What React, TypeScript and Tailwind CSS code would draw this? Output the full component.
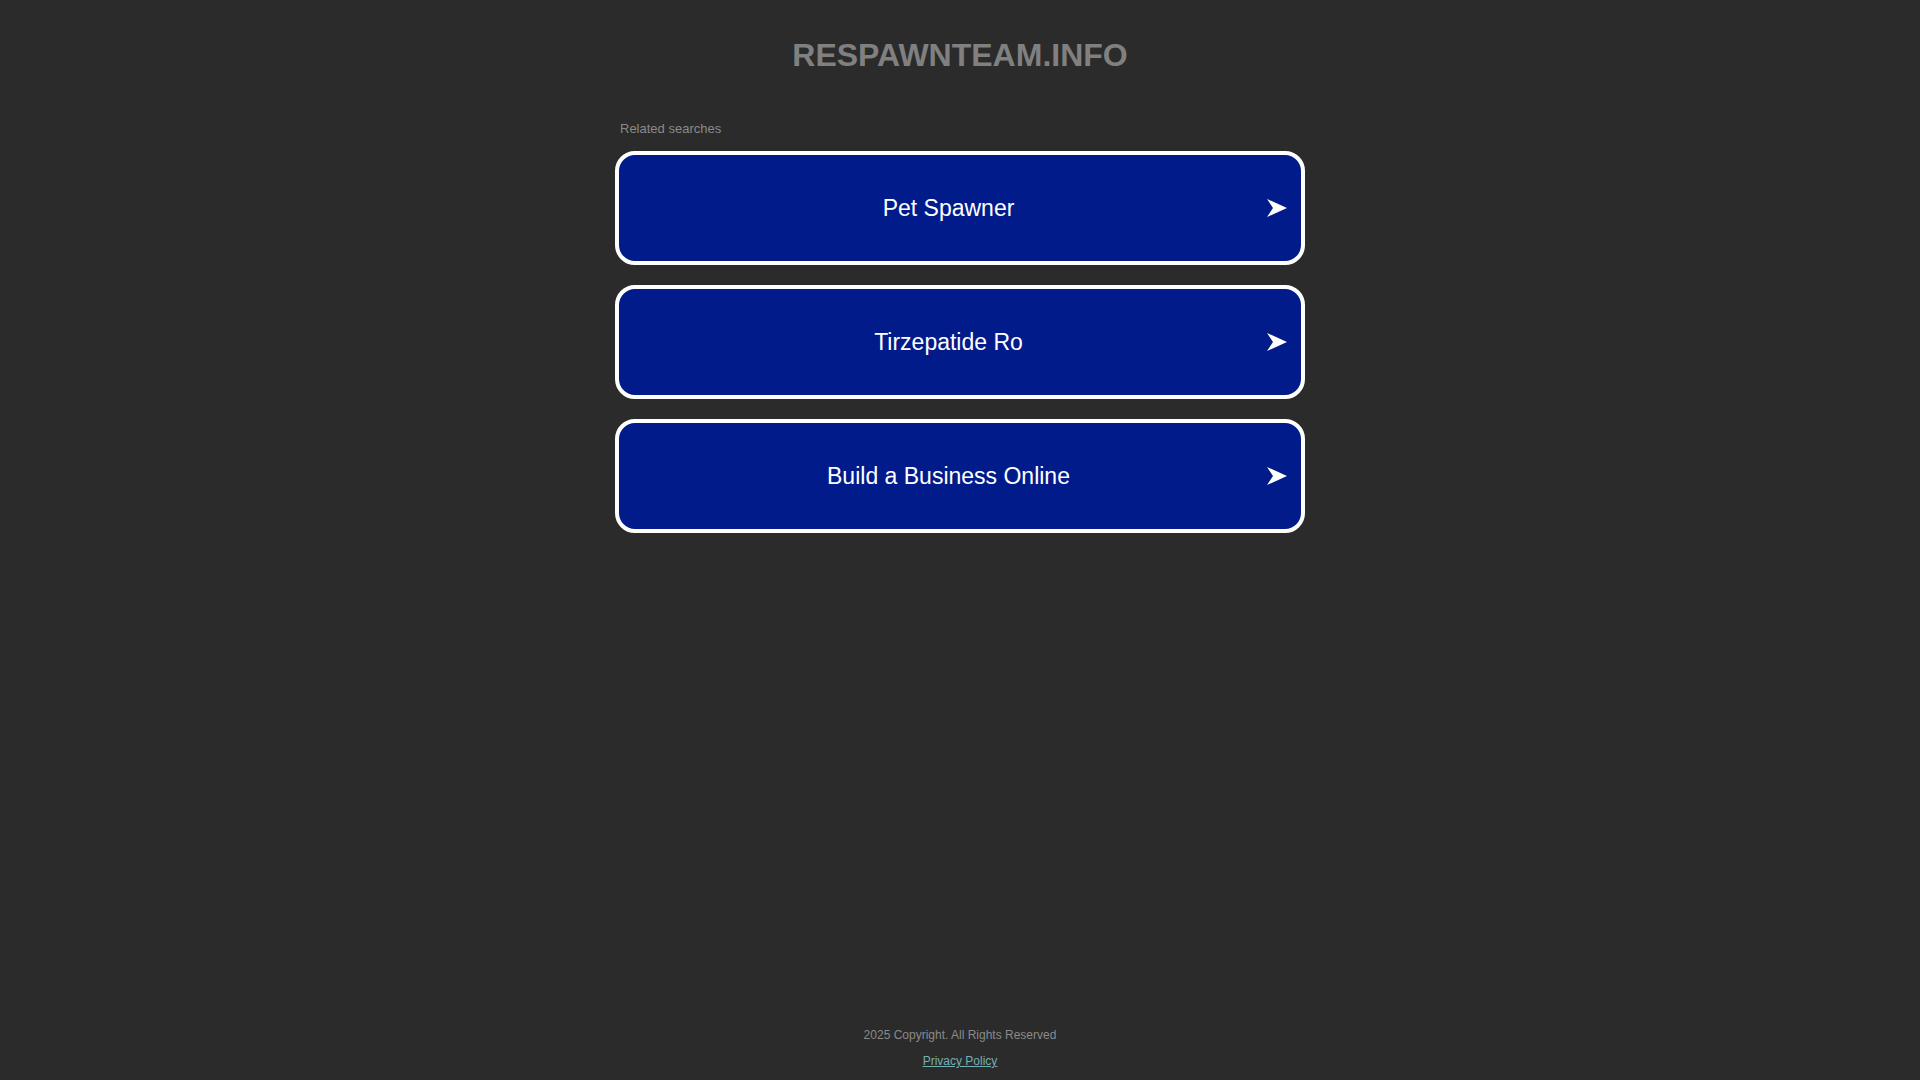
const searches = ["Pet Spawner", "Tirzepatide Ro", "Build a Business Online"];

function Arrow() {
  return (
    <svg width="20" height="18" viewBox="0 0 20 18" className="shrink-0">
      <path d="M0 0 L20 9 L0 18 L6 9 Z" fill="#ffffff" />
    </svg>
  );
}

export default function App() {
  return (
    <div className="min-h-screen flex flex-col bg-[#2b2b2b] font-['Liberation_Sans',Arial,sans-serif]">
      <header className="pt-[37px] text-center">
        <h1 className="text-[32px] leading-[36px] font-bold text-[#808080]">RESPAWNTEAM.INFO</h1>
      </header>

      <main className="mt-[48px] flex justify-center">
        <div className="w-[690px]">
          <p className="pl-[5px] text-[13px] leading-[15px] text-[#8a8a8a]">Related searches</p>
          <ul className="mt-[15px] flex flex-col gap-5">
            {searches.map((s) => (
              <li key={s}>
                <a
                  href="#"
                  className="flex h-[114px] items-center rounded-[20px] border-4 border-white bg-[#021b8b] pl-[11px] pr-[14px] text-white"
                >
                  <span className="flex-1 text-center text-[23px]">{s}</span>
                  <Arrow />
                </a>
              </li>
            ))}
          </ul>
        </div>
      </main>

      <footer className="mt-auto flex flex-col items-center gap-3 pb-3 text-[12px] leading-[14px]">
        <p className="text-[#8a8a8a]">2025 Copyright. All Rights Reserved</p>
        <a href="#" className="text-[#73b0b5] underline">
          Privacy Policy
        </a>
      </footer>
    </div>
  );
}
